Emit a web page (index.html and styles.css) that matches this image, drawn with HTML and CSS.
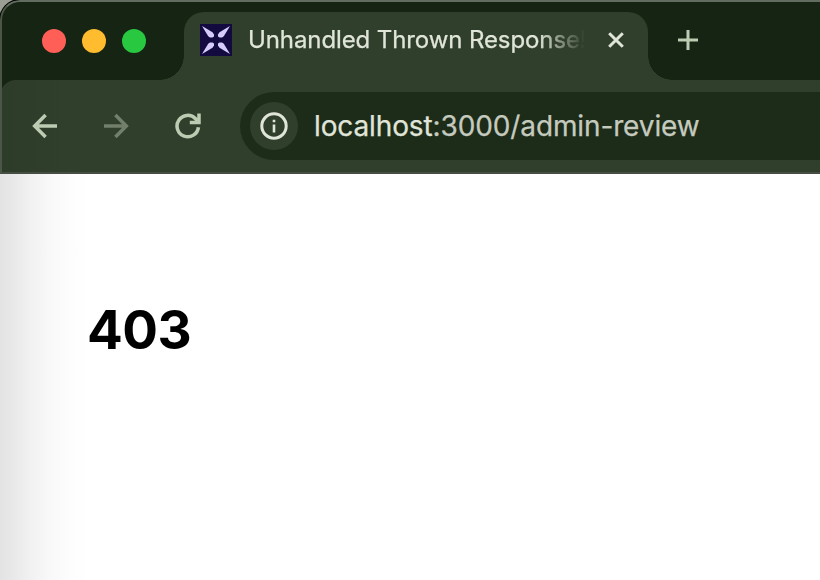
FILE: index.html
```html
<!DOCTYPE html>
<html lang="en">
<head>
<meta charset="utf-8">
<title>Unhandled Thrown Response!</title>
<link rel="stylesheet" href="styles.css">
</head>
<body>
<div class="window">
  <header class="tab-strip">
    <div class="lights">
      <span class="light red"></span>
      <span class="light yellow"></span>
      <span class="light green"></span>
    </div>
    <div class="tab">
      <svg class="favicon" viewBox="0 0 32 32">
        <rect width="32" height="32" fill="#130a40"/>
        <g fill="#d6cbfa">
          <path d="M2 2L12.5 8.2L14 10.5V12.6L12.5 13.6H10L8.2 12.3Z"/>
          <path d="M30 2L19.5 8.2L18 10.5V12.6L19.5 13.6H22L23.8 12.3Z"/>
          <path d="M2 30L12.5 23.8L14 21.5V19.4L12.5 18.4H10L8.2 19.7Z"/>
          <path d="M30 30L19.5 23.8L18 21.5V19.4L19.5 18.4H22L23.8 19.7Z"/>
        </g>
      </svg>
      <span class="tab-title">Unhandled Thrown Response!</span>
      <svg class="close" viewBox="0 0 16 16"><path d="M1.2 1.2L14.8 14.8M14.8 1.2L1.2 14.8"/></svg>
    </div>
    <svg class="plus" viewBox="0 0 20 20"><path d="M10 0V20M0 10H20"/></svg>
  </header>
  <nav class="toolbar">
    <svg class="nav-icon back" viewBox="0 0 26 26"><path d="M25 13H2.5M13.6 2.1L2.7 13L13.6 23.9"/></svg>
    <svg class="nav-icon forward" viewBox="0 0 26 26"><path d="M0 13H22.5M11.4 2.1L22.3 13L11.4 23.9"/></svg>
    <svg class="nav-icon reload" viewBox="0 0 26 26"><path d="M23.4 14.2A10.7 10.7 0 1 1 20.6 5.8L23.3 8.8M24 .6V9.4H14.8"/><path class="fill" d="M24 4V10H18Z"/></svg>
    <div class="address">
      <span class="info">
        <svg viewBox="0 0 28 28"><circle cx="14" cy="14" r="12.2" fill="none" stroke="#e0e5d9" stroke-width="3"/><path d="M12.7 7.7H15.3V10.3H12.7ZM12.7 12.5H15.3V20.5H12.7Z" fill="#e0e5d9"/></svg>
      </span>
      <span class="url"><span class="host">localhost</span>:3000/admin-review</span>
    </div>
  </nav>
  <main class="page"><h1>403</h1></main>
</div>
</body>
</html>
```
FILE: styles.css
```css
* { box-sizing: border-box; }
body {
  margin: 0;
  background: #9b9e92;
  font-family: Inter, "Liberation Sans", sans-serif;
  overflow: hidden;
}
.window {
  width: 820px;
  height: 580px;
  display: flex;
  flex-direction: column;
  background: #162413;
  border-top-left-radius: 20px;
  box-shadow: 0 0 0 1px #000;
  overflow: hidden;
  position: relative;
}
.window::after {
  content: "";
  box-sizing: border-box;
  position: absolute;
  inset: 0 -4px auto 0;
  height: 174px;
  border: 2px solid #626c60;
  border-left-color: #4b5548;
  border-bottom-color: #464d43;
  border-top-left-radius: 20px;
}
.tab-strip {
  height: 80px;
  flex: none;
  display: flex;
  padding: 12px 0 0 42px;
}
.lights {
  display: flex;
  gap: 16px;
  width: 142px;
  padding-top: 17px;
}
.light {
  width: 24px;
  height: 24px;
  border-radius: 50%;
}
.red { background: #ff5f57; }
.yellow { background: #febc2e; }
.green { background: #28c840; }
.tab {
  position: relative;
  width: 464px;
  height: 68px;
  display: flex;
  align-items: flex-start;
  padding: 12px 16px 0;
  background: #303f2b;
  border-radius: 20px 20px 0 0;
}
.tab::before,
.tab::after {
  content: "";
  position: absolute;
  bottom: 0;
  width: 24px;
  height: 24px;
}
.tab::before {
  left: -24px;
  background: radial-gradient(circle at 0 0, transparent 23.5px, #303f2b 24px);
}
.tab::after {
  right: -24px;
  background: radial-gradient(circle at 100% 0, transparent 23.5px, #303f2b 24px);
}
.favicon {
  width: 32px;
  height: 32px;
  flex: none;
}
.tab-title {
  width: 343px;
  margin-left: 16px;
  white-space: nowrap;
  font-size: 24px;
  line-height: 32px;
  letter-spacing: -0.1px;
  -webkit-text-stroke: 0.25px currentColor;
  color: #e0e5d9;
  -webkit-mask-image: linear-gradient(90deg, #000 290px, transparent 337px);
  mask-image: linear-gradient(90deg, #000 290px, transparent 337px);
}
.close {
  width: 16px;
  height: 16px;
  margin: 8px 0 0 17px;
  flex: none;
  fill: none;
  stroke: #e0e5d9;
  stroke-width: 3;
}
.plus {
  width: 20px;
  height: 20px;
  margin: 18px 0 0 30px;
  fill: none;
  stroke: #bdcbb3;
  stroke-width: 3;
}
.toolbar {
  height: 94px;
  flex: none;
  display: flex;
  align-items: center;
  padding: 0 0 2px 32px;
  background: linear-gradient(90deg, #2d3b29, #303f2b 70px);
  border-top-left-radius: 16px;
}
.nav-icon {
  width: 26px;
  height: 26px;
  flex: none;
  fill: none;
  stroke: #bdcbb3;
  stroke-width: 3.5;
}
.forward {
  margin-left: 46px;
  stroke: #717f6b;
}
.reload { margin-left: 45px; }
.nav-icon .fill { fill: #bdcbb3; stroke: none; }
.address {
  flex: 1;
  height: 68px;
  display: flex;
  align-items: center;
  margin-left: 39px;
  padding-left: 10px;
  background: #1d2b19;
  border-radius: 34px 0 0 34px;
}
.info {
  width: 48px;
  height: 48px;
  display: grid;
  place-items: center;
  background: #303f2b;
  border-radius: 50%;
}
.info svg { width: 28px; height: 28px; }
.url {
  margin-left: 16px;
  font-size: 28px;
  line-height: 34px;
  letter-spacing: -0.12px;
  -webkit-text-stroke: 0.25px currentColor;
  white-space: nowrap;
  color: #c5cabf;
}
.host { color: #e0e5d9; }
.page {
  flex: 1;
  padding: 124px 0 0 87px;
  background: linear-gradient(90deg, #e3e3e3 0, #e7e7e7 10px, #f1f1f1 30px, #f9f9f9 52px, #fdfdfd 72px, #fff 90px);
}
h1 {
  margin: 0;
  font-size: 53px;
  line-height: 64px;
  font-weight: 700;
  letter-spacing: -0.6px;
  color: #000;
}
```
